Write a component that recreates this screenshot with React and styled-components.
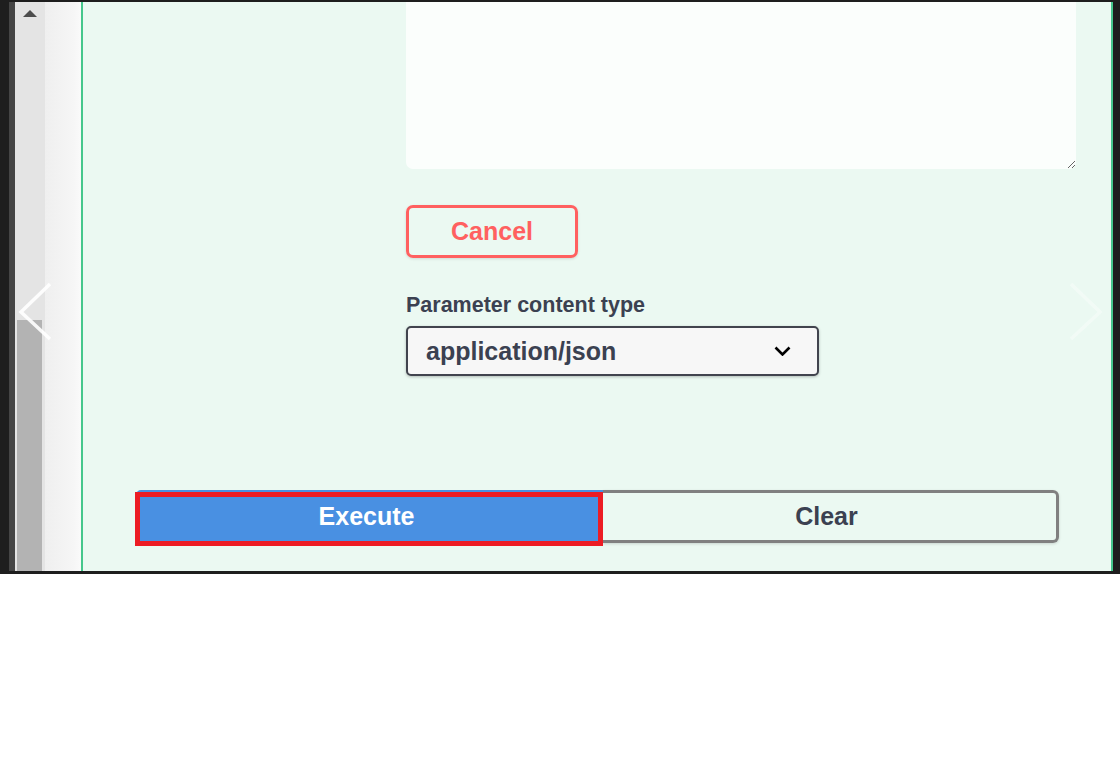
import React from 'react';
import styled, { createGlobalStyle } from 'styled-components';

const GlobalStyle = createGlobalStyle`
  html, body {
    margin: 0;
    padding: 0;
    background: #ffffff;
    font-family: "Liberation Sans", Arial, sans-serif;
  }
`;

const Frame = styled.div`
  position: relative;
  width: 1120px;
  height: 574px;
  box-sizing: border-box;
  padding: 2px 7px 3px 9px;
  background: #1e1e1e;
  display: flex;
  overflow: hidden;
`;

const Scrollbar = styled.div`
  width: 30px;
  border-left: 6px solid #454545;
  background: #e4e4e4;
  display: flex;
  flex-direction: column;
`;

const ScrollArrow = styled.div`
  height: 20px;
  display: flex;
  justify-content: center;
  padding-top: 8px;
  box-sizing: border-box;

  &::before {
    content: '';
    width: 0;
    height: 0;
    border-left: 7px solid transparent;
    border-right: 7px solid transparent;
    border-bottom: 7px solid #4d4d4d;
  }
`;

const ScrollTrack = styled.div`
  flex: 1;
  display: flex;
  flex-direction: column;
  justify-content: flex-end;
`;

const ScrollThumb = styled.div`
  height: 251px;
  margin: 0 3px 0 2px;
  background: #b3b3b3;
`;

const Gutter = styled.div`
  width: 36px;
  background: linear-gradient(to right, #efefef, #f6f6f6 80%, #fafafa);
`;

const Panel = styled.div`
  flex: 1;
  display: flex;
  flex-direction: column;
  border-left: 2px solid #45c78c;
  border-right: 2px solid #45c78c;
  background: #ebf9f2;
  color: #3b4151;
`;

const ParamRow = styled.div`
  display: grid;
  grid-template-columns: 323px 1fr;
  padding-right: 35px;
`;

const ParamCell = styled.div`
  grid-column: 2;
  display: flex;
  flex-direction: column;
  align-items: flex-start;
`;

const BodyInput = styled.textarea`
  display: block;
  width: 100%;
  height: 167px;
  box-sizing: border-box;
  border: none;
  outline: none;
  border-radius: 0 0 7px 7px;
  background: #fbfefc;
  resize: vertical;
  font: inherit;
`;

const CancelButton = styled.button`
  margin-top: 36px;
  width: 172px;
  height: 53px;
  box-sizing: border-box;
  border: 3px solid #ff6060;
  border-radius: 7px;
  background: transparent;
  color: #ff6060;
  font-family: "Liberation Sans", Arial, sans-serif;
  font-size: 25px;
  font-weight: 700;
  box-shadow: 0 1px 3px rgba(0, 0, 0, 0.12);
  cursor: pointer;
`;

const Label = styled.div`
  margin-top: 35px;
  font-size: 21.5px;
  line-height: 25px;
  font-weight: 700;
`;

const Select = styled.div`
  margin-top: 8px;
  width: 413px;
  height: 50px;
  box-sizing: border-box;
  padding: 0 26px 0 18px;
  display: flex;
  align-items: center;
  justify-content: space-between;
  border: 2px solid #41444e;
  border-radius: 5px;
  background: #f7f7f7;
  box-shadow: 0 1px 3px rgba(0, 0, 0, 0.25);
  font-size: 25px;
  font-weight: 700;
`;

const ExecuteWrapper = styled.div`
  margin-top: 114px;
  padding: 0 52px 0 53px;
  display: flex;
`;

const ExecuteButton = styled.button`
  position: relative;
  width: 467px;
  height: 53px;
  padding: 0 6px 0 0;
  border: none;
  border-radius: 5px 0 0 5px;
  background: #4990e2;
  color: #ffffff;
  font-family: "Liberation Sans", Arial, sans-serif;
  font-size: 25px;
  font-weight: 700;
  cursor: pointer;
`;

const Highlight = styled.span`
  position: absolute;
  top: 2px;
  left: -1px;
  right: 0;
  bottom: -3px;
  border: 5px solid #ec1c24;
  pointer-events: none;
`;

const ClearButton = styled.button`
  flex: 1;
  height: 53px;
  padding: 0 6px 0 0;
  box-sizing: border-box;
  border: 3px solid #808080;
  border-left: none;
  border-radius: 0 6px 6px 0;
  background: transparent;
  color: #3b4151;
  font-family: "Liberation Sans", Arial, sans-serif;
  font-size: 25px;
  font-weight: 700;
  box-shadow: 0 1px 3px rgba(0, 0, 0, 0.15);
  cursor: pointer;
`;

const NavArrow = styled.svg`
  position: absolute;
  top: 282px;
  left: ${(p) => (p.$side === 'left' ? '17px' : '1068px')};
  width: 36px;
  height: 60px;
  pointer-events: none;
`;

const Chevron = () => (
  <svg width="17" height="10" viewBox="0 0 17 10">
    <polyline points="1.5,1.5 8.5,8.5 15.5,1.5" fill="none" stroke="#000" strokeWidth="2.6" />
  </svg>
);

export default function App() {
  return (
    <>
      <GlobalStyle />
      <Frame>
        <Scrollbar>
          <ScrollArrow />
          <ScrollTrack>
            <ScrollThumb />
          </ScrollTrack>
        </Scrollbar>
        <Gutter />
        <Panel>
          <ParamRow>
            <ParamCell>
              <BodyInput readOnly defaultValue="" />
              <CancelButton>Cancel</CancelButton>
              <Label>Parameter content type</Label>
              <Select>
                <span>application/json</span>
                <Chevron />
              </Select>
            </ParamCell>
          </ParamRow>
          <ExecuteWrapper>
            <ExecuteButton>
              Execute
              <Highlight />
            </ExecuteButton>
            <ClearButton>Clear</ClearButton>
          </ExecuteWrapper>
        </Panel>
        <NavArrow $side="left" viewBox="0 0 36 60">
          <polyline points="33,2 4,30 33,57" fill="none" stroke="rgba(255,255,255,0.9)" strokeWidth="3.5" />
        </NavArrow>
        <NavArrow $side="right" viewBox="0 0 36 60">
          <polyline points="3,2 32,30 3,57" fill="none" stroke="rgba(255,255,255,0.35)" strokeWidth="3.5" />
        </NavArrow>
      </Frame>
    </>
  );
}
